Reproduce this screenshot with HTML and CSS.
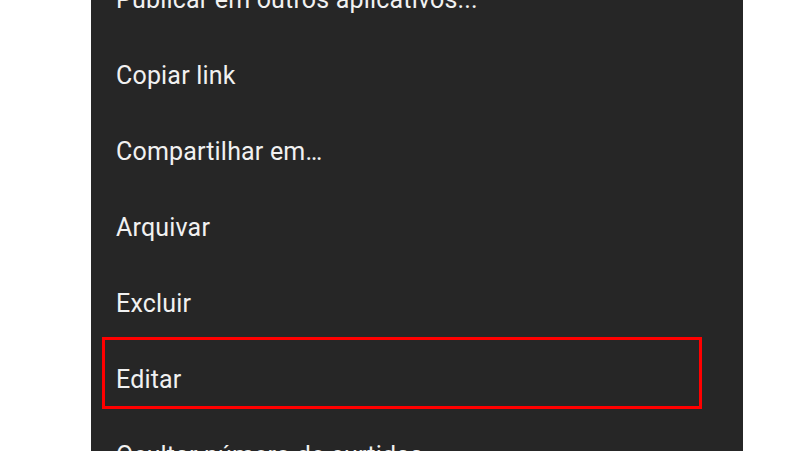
FILE: index.html
```html
<!DOCTYPE html>
<html lang="pt-BR">
<head>
  <meta charset="UTF-8">
  <meta name="viewport" content="width=device-width, initial-scale=1.0">
  <title>Opções da publicação</title>
  <link rel="stylesheet" href="styles.css">
</head>
<body>

<div class="options-sheet">
  <ul class="options-list">
    <li class="option">Publicar em outros aplicativos...</li>
    <li class="option">Copiar link</li>
    <li class="option">Compartilhar em…</li>
    <li class="option">Arquivar</li>
    <li class="option">Excluir</li>
    <li class="option option-marked">Editar<span class="mark-box"></span></li>
    <li class="option">Ocultar número de curtidas</li>
  </ul>
</div>

</body>
</html>
```

FILE: styles.css
```css
/* Post options menu */
html, body {
  margin: 0;
  height: 100%;
  background-color: #fff;
  overflow: hidden;
}

.options-sheet {
  margin-left: 91px;
  width: 652px;
  height: 451px;
  background-color: #262626;
  overflow: hidden;
}

.options-list {
  list-style: none;
  margin: -39px 0 0 0;
  padding: 0;
}

.option {
  position: relative;
  display: flex;
  align-items: center;
  height: 76px;
  padding-left: 25px;
  font-family: Roboto, "Liberation Sans", sans-serif;
  font-size: 25px;
  letter-spacing: 0.18px;
  color: #f1f1f1;
  white-space: nowrap;
}

/* red outline drawn over the "Editar" row */
.mark-box {
  position: absolute;
  top: -4px;
  left: 11px;
  width: 600px;
  height: 72px;
  box-sizing: border-box;
  border: 3px solid #ff0000;
}
```
